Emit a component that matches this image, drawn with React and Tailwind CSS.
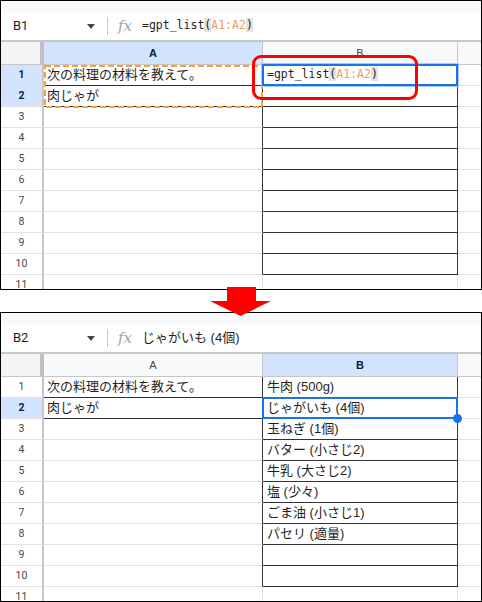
import React from "react";

const SANS = "font-['Liberation_Sans','Noto_Sans_CJK_JP',sans-serif]";
const MONO = "font-['DejaVu_Sans_Mono','Liberation_Mono',monospace]";

function Caret() {
  return (
    <svg width="8" height="5" viewBox="0 0 8 5" className="shrink-0">
      <polygon points="0,0 8,0 4,5" fill="#444746" />
    </svg>
  );
}

function TopFormula() {
  return (
    <span className={`${MONO} text-[11.5px] text-[#1f1f1f] whitespace-pre`}>
      =gpt_list<span className="bg-[#e3e3e3]">(</span>
      <span className="text-[#f29d5c]">A1:A2</span>
      <span className="bg-[#e3e3e3]">)</span>
    </span>
  );
}

function Panel({ nameBox, formula, selCol, selRows, aVals, bVals, top }) {
  const rows = [1, 2, 3, 4, 5, 6, 7, 8, 9, 10, 11];
  return (
    <div className={`h-[290px] border border-black overflow-hidden bg-white flex flex-col ${SANS}`}>
      <div className="h-[11px] shrink-0 bg-[#f8f9fa]" />
      <div className="h-[30px] shrink-0 border-b-2 border-[#c7c7c7] flex items-center bg-white">
        <span className="ml-[12px] w-[74px] text-[13px] text-[#1f1f1f] font-['Roboto',sans-serif]">{nameBox}</span>
        <Caret />
        <div className="ml-[12px] w-px h-[18px] bg-[#c7c7c7]" />
        <span className="ml-[10px] w-[16px] text-[15px] italic text-[#a0a3a6] font-['DejaVu_Serif',serif] leading-none">fx</span>
        <span className="ml-[8px] flex items-center">{formula}</span>
      </div>
      <div className="grid grid-cols-[43px_219px_195px_1fr]">
        {/* header row */}
        <div className="h-[23px] bg-[#f1f3f4] border-r-4 border-b border-r-[#c0c0c0] border-b-[#c7c7c7]" />
        <div
          className={`h-[23px] border-r border-b border-[#c7c7c7] flex items-center justify-center text-[11px] ${
            selCol === "A" ? "bg-[#d3e3fd] font-bold text-[#041e49]" : "bg-[#f8f9fa] text-[#444746]"
          }`}
        >
          A
        </div>
        <div
          className={`h-[23px] border-r border-b border-[#c7c7c7] flex items-center justify-center text-[11px] ${
            selCol === "B" ? "bg-[#d3e3fd] font-bold text-[#041e49]" : "bg-[#f8f9fa] text-[#444746]"
          }`}
        >
          B
        </div>
        <div className="h-[23px] border-b border-[#c7c7c7] bg-[#f8f9fa]" />
        {rows.map((r) => {
          const sel = selRows.includes(r);
          return (
            <React.Fragment key={r}>
              <div
                className={`h-[21px] border-b border-b-[#e1e1e1] border-r-2 border-r-[#c7c7c7] flex items-center justify-center text-[10.5px] font-['Roboto',sans-serif] ${
                  sel ? "bg-[#d3e3fd] font-bold text-[#041e49]" : "bg-white text-[#444746]"
                }`}
              >
                {r}
              </div>
              <div
                className={`relative h-[21px] border-b border-r flex items-center pl-[3px] text-[13px] text-[#1f1f1f] whitespace-nowrap ${
                  r <= 2 ? "border-b-[#333]" : "border-b-[#e1e1e1]"
                } ${r <= 10 ? "border-r-[#333]" : "border-r-[#e1e1e1]"}`}
              >
                {aVals[r - 1] || ""}
                {top && r === 1 && (
                  <svg className="absolute left-0 top-0 z-10" width="219" height="43" viewBox="0 0 219 43">
                    <rect x="1" y="1" width="217" height="41" fill="none" stroke="#f5a03c" strokeWidth="2" strokeDasharray="6 3" />
                  </svg>
                )}
              </div>
              <div
                className={`relative h-[21px] border-b border-r flex items-center pl-[4px] text-[13px] text-[#1f1f1f] whitespace-nowrap ${
                  r <= 10 ? "border-b-[#333] border-r-[#333]" : "border-b-[#e1e1e1] border-r-[#e1e1e1]"
                }`}
              >
                {bVals[r - 1] || ""}
                {top && r === 1 && (
                  <>
                    <div className="absolute -left-[1px] -top-[1px] -right-[1px] -bottom-[1px] border-2 border-[#1a73e8] shadow-[0_0_0_1px_#a8c7fa] z-10" />
                    <div className="absolute left-[-11px] top-[-10px] w-[166px] h-[45px] border-[3px] border-[#ff0000] rounded-[9px] z-20" />
                  </>
                )}
                {!top && r === 2 && (
                  <>
                    <div className="absolute -left-[1px] -top-[1px] -right-[1px] -bottom-[1px] border-2 border-[#1a73e8] z-10" />
                    <div className="absolute right-[-5px] bottom-[-5px] w-[9px] h-[9px] rounded-full bg-[#1a73e8] z-20" />
                  </>
                )}
              </div>
              <div className="h-[21px] border-b border-[#e1e1e1]" />
            </React.Fragment>
          );
        })}
      </div>
    </div>
  );
}

export default function App() {
  const aVals = ["次の料理の材料を教えて。", "肉じゃが"];
  return (
    <div className="w-[482px] h-[602px] bg-white overflow-hidden">
      <Panel
        top
        nameBox="B1"
        formula={<TopFormula />}
        selCol="A"
        selRows={[1, 2]}
        aVals={aVals}
        bVals={[<TopFormula key="f" />]}
      />
      <div className="relative h-[22px]">
        <svg className="absolute left-[210px] top-[-3px] z-30" width="61" height="29" viewBox="0 0 61 29">
          <rect x="17" y="0" width="29" height="14" fill="#ff0000" />
          <polygon points="0,14 61,14 30.5,29" fill="#ff0000" />
        </svg>
      </div>
      <Panel
        nameBox="B2"
        formula={<span className="text-[13px] text-[#1f1f1f]">じゃがいも (4個)</span>}
        selCol="B"
        selRows={[2]}
        aVals={aVals}
        bVals={[
          "牛肉 (500g)",
          "じゃがいも (4個)",
          "玉ねぎ (1個)",
          "バター (小さじ2)",
          "牛乳 (大さじ2)",
          "塩 (少々)",
          "ごま油 (小さじ1)",
          "パセリ (適量)",
        ]}
      />
    </div>
  );
}
